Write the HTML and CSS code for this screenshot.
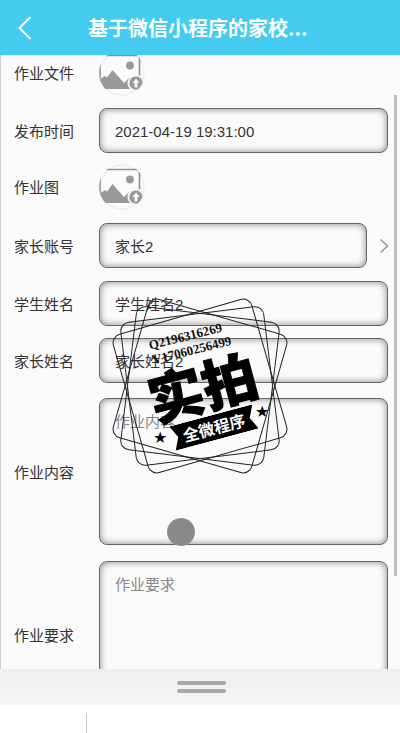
FILE: index.html
```html
<!DOCTYPE html>
<html lang="zh">
<head>
    <meta charset="UTF-8">
    <meta name="viewport" content="width=device-width, initial-scale=1.0">
    <title>基于微信小程序的家校</title>
    <link rel="stylesheet" href="styles.css">
</head>
<body>
    <div class="phone">
        <header class="topbar">
            <svg class="back" width="16" height="26" viewBox="0 0 16 26"><path d="M13.5 2 L2.5 13 L13.5 24" fill="none" stroke="#fff" stroke-width="2"/></svg>
            <h1 class="title">基于微信小程序的家校...</h1>
        </header>

        <main class="content">
            <form class="form">
                <div class="row row-pic gap-12">
                    <label>作业文件</label>
                    <span class="pic"><svg width="46" height="46" viewBox="0 0 46 46"><use href="#picIcon"/></svg></span>
                </div>
                <div class="row gap-11">
                    <label>发布时间</label>
                    <div class="field">2021-04-19 19:31:00</div>
                </div>
                <div class="row row-pic">
                    <label>作业图</label>
                    <span class="pic"><svg width="46" height="46" viewBox="0 0 46 46"><use href="#picIcon"/></svg></span>
                </div>
                <div class="row">
                    <label>家长账号</label>
                    <div class="field field-short">家长2</div>
                    <svg class="chevron" width="10" height="16" viewBox="0 0 10 16"><path d="M1.5 1.5 L8.5 8 L1.5 14.5" fill="none" stroke="#999" stroke-width="1.6"/></svg>
                </div>
                <div class="row gap-12">
                    <label>学生姓名</label>
                    <div class="field">学生姓名2</div>
                </div>
                <div class="row gap-15">
                    <label>家长姓名</label>
                    <div class="field">家长姓名2</div>
                </div>
                <div class="row gap-16">
                    <label>作业内容</label>
                    <div class="field area placeholder">作业内容</div>
                </div>
                <div class="row">
                    <label>作业要求</label>
                    <div class="field area placeholder">作业要求</div>
                </div>
            </form>
            <div class="scrollbar"></div>
        </main>

        <div class="handle-bar">
            <div class="handle"></div>
            <div class="handle"></div>
        </div>
        <div class="bottom"><div class="divider"></div></div>

        <div class="stamp">
            <svg class="frames" width="180" height="182" viewBox="0 0 180 182">
                <g fill="none" stroke="#222" stroke-width="1">
                    <rect x="18" y="19" width="144" height="144" rx="9" transform="rotate(-16 90 91)"/>
                    <rect x="18" y="19" width="144" height="144" rx="9" transform="rotate(-7 90 91)"/>
                    <rect x="18" y="19" width="144" height="144" rx="9" transform="rotate(7 90 91)"/>
                    <rect x="18" y="19" width="144" height="144" rx="9" transform="rotate(16 90 91)"/>
                </g>
            </svg>
            <div class="qq">Q2196316269<br>V17060256499</div>
            <div class="big">实拍</div>
            <div class="ribbon">全微程序</div>
            <span class="star star-a">★</span>
            <span class="star star-b">★</span>
        </div>
        <div class="touch-dot"></div>
    </div>

    <svg width="0" height="0" class="defs">
        <symbol id="picIcon" viewBox="0 0 46 46">
            <circle cx="23" cy="23" r="23" fill="#efefef"/>
            <circle cx="23" cy="23" r="21" fill="#fbfbfb"/>
            <path d="M1 5.5 H41 M1 5 V39 M40.5 5 V27" fill="none" stroke="#8f8f8f" stroke-width="1.6"/>
            <circle cx="31" cy="15.5" r="3.9" fill="#999"/>
            <path d="M1.5 39 V29 L6 26 L8 27.5 L13.5 20 L25 33 L30 28 L38 39 Z" fill="#999"/>
            <circle cx="37" cy="33" r="8.6" fill="#f4f4f4"/>
            <circle cx="37" cy="33" r="6.6" fill="#999"/>
            <path d="M37 28.5 L40.5 33 H38.4 V37.5 H35.6 V33 H33.5 Z" fill="#f7f7f7"/>
        </symbol>
    </svg>
</body>
</html>
```

FILE: styles.css
```css
* {
    box-sizing: border-box;
}
html, body {
    margin: 0;
    padding: 0;
}
body {
    font-family: "Noto Sans CJK SC", "Liberation Sans", sans-serif;
    background: #fff;
    color: #333;
}
.phone {
    position: relative;
    width: 400px;
    height: 733px;
    overflow: hidden;
    display: flex;
    flex-direction: column;
}
.topbar {
    flex: none;
    height: 55px;
    background: #45cbf0;
    color: #fff;
    display: flex;
    align-items: center;
    padding-left: 17px;
}
.back {
    flex: none;
    margin-right: 55px;
}
.title {
    margin: 0;
    font-size: 20px;
    font-weight: 700;
    line-height: 55px;
    white-space: nowrap;
}
.content {
    position: relative;
    flex: none;
    height: 614px;
    overflow: hidden;
    background: #fafafa;
    border-left: 1px solid #ccc;
}
.form {
    margin-top: -5px;
    display: flex;
    flex-direction: column;
    padding-left: 13px;
}
.row {
    display: flex;
    align-items: center;
    margin-bottom: 13px;
}
.gap-11 {
    margin-bottom: 11px;
}
.gap-12 {
    margin-bottom: 12px;
}
.gap-15 {
    margin-bottom: 15px;
}
.gap-16 {
    margin-bottom: 16px;
}
.row label {
    flex: none;
    width: 85px;
    font-size: 15px;
    line-height: 20px;
    color: #333;
}
.row-pic {
    height: 46px;
}
.pic {
    display: block;
    width: 46px;
    height: 46px;
    border-radius: 50%;
    overflow: hidden;
}
.pic svg {
    display: block;
}
.field {
    width: 289px;
    height: 45px;
    padding: 0 15px;
    font-size: 15px;
    line-height: 45px;
    color: #333;
    font-family: "Liberation Sans", "Noto Sans CJK SC", sans-serif;
    background: #fafafa;
    border: 1px solid #666;
    border-radius: 8px;
    box-shadow: inset 0 0 7px #808080;
}
.field-short {
    width: 268px;
}
.chevron {
    margin-left: 12px;
}
.area {
    height: 147px;
    line-height: 20px;
    padding-top: 13px;
}
.placeholder {
    color: #888;
}
.scrollbar {
    position: absolute;
    left: 393px;
    top: 40px;
    width: 3px;
    height: 481px;
    background: #bdbdbd;
}
.handle-bar {
    flex: none;
    height: 36px;
    background: linear-gradient(#eeeeee, #f5f5f5);
    display: flex;
    flex-direction: column;
    align-items: center;
    justify-content: center;
    gap: 4px;
    padding-left: 3px;
}
.handle {
    width: 49px;
    height: 4px;
    border-radius: 2px;
    background: #a8a8a8;
}
.bottom {
    flex: 1;
    background: #fff;
    padding: 8px 0 0 86px;
}
.divider {
    width: 1px;
    height: 100%;
    background: #ccc;
}
.stamp {
    position: absolute;
    left: 110px;
    top: 295px;
    width: 180px;
    height: 182px;
    color: #000;
}
.frames {
    position: absolute;
    left: 0;
    top: 0;
}
.qq {
    position: absolute;
    left: 37px;
    top: 43px;
    font-family: "Liberation Serif", serif;
    font-weight: 700;
    font-size: 13px;
    line-height: 15px;
    white-space: nowrap;
    transform: rotate(-14deg);
    transform-origin: left top;
    color: #111;
}
.big {
    position: absolute;
    left: 32px;
    top: 57px;
    width: 120px;
    text-align: center;
    font-size: 55px;
    line-height: 66px;
    font-weight: 900;
    white-space: nowrap;
    -webkit-text-stroke: 1px #000;
    transform: rotate(-15deg);
}
.ribbon {
    position: absolute;
    left: 61px;
    top: 120px;
    width: 86px;
    height: 25px;
    background: #000;
    color: #fff;
    font-size: 16px;
    font-weight: 700;
    line-height: 25px;
    text-align: center;
    white-space: nowrap;
    clip-path: polygon(0 0, 100% 0, 93% 50%, 100% 100%, 0 100%, 7% 50%);
    transform: rotate(-15deg);
}
.star {
    position: absolute;
    font-size: 16px;
    line-height: 16px;
    color: #000;
    font-family: "DejaVu Sans", sans-serif;
}
.star-a {
    left: 43px;
    top: 135px;
}
.star-b {
    left: 145px;
    top: 109px;
}
.touch-dot {
    position: absolute;
    left: 167px;
    top: 518px;
    width: 28px;
    height: 28px;
    border-radius: 50%;
    background: radial-gradient(circle, #888 0, #888 62%, #a5a5a5 85%, #c8c8c8 100%);
}
.defs {
    position: absolute;
}
```
